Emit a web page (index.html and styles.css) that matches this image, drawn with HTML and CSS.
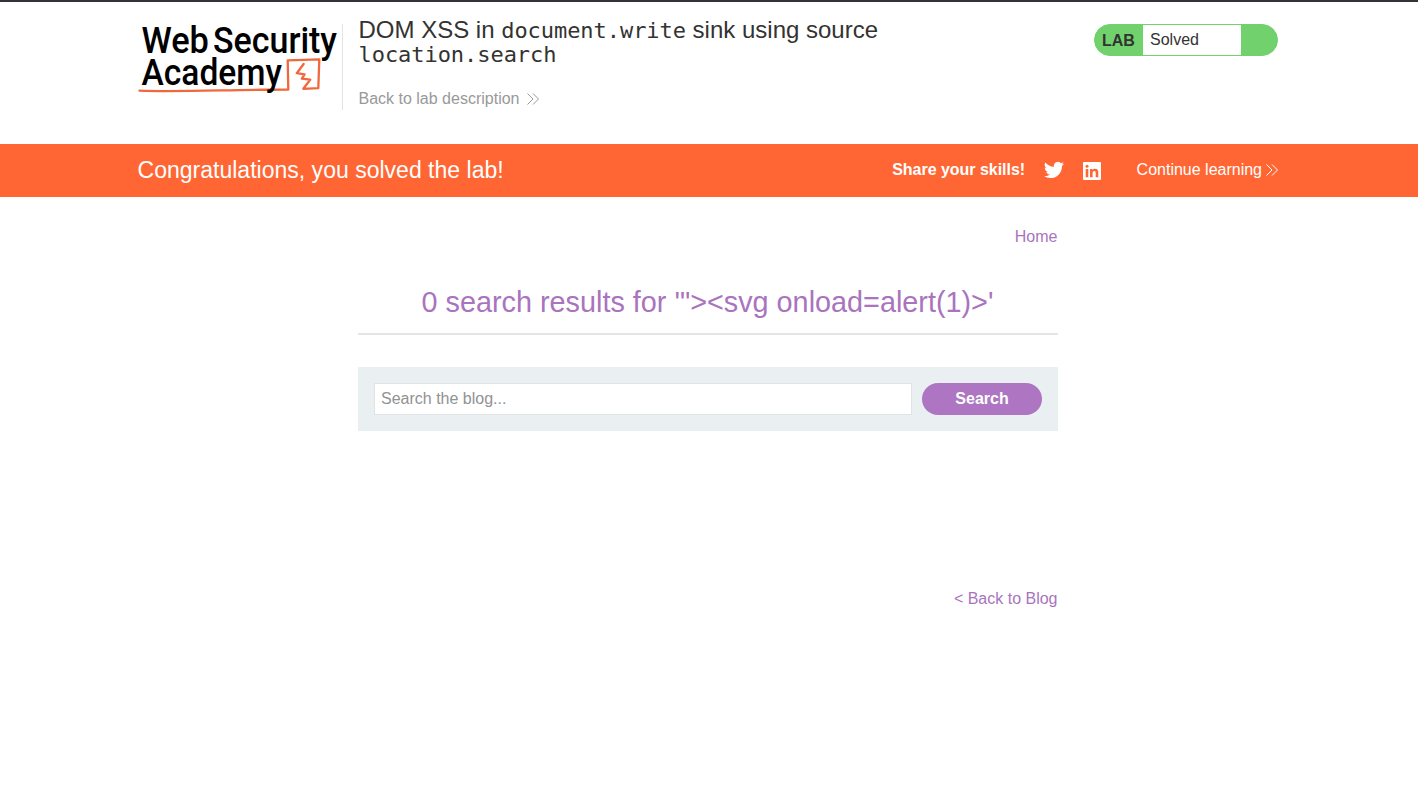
FILE: index.html
```html
<!DOCTYPE html>
<html lang="en">
<head>
<meta charset="utf-8">
<title>DOM XSS in document.write sink using source location.search</title>
<link rel="stylesheet" href="styles.css">
</head>
<body>
<header class="lab-header">
  <div class="container header-row">
    <svg class="logo" viewBox="0 0 204 86" role="img" aria-label="Web Security Academy">
      <path class="logo-line" d="M1.500 66.600 C40 68.200 90 65.600 150.300 65.500 L149.700 36.300 L181.300 35.400 L180.300 64.200 L165.300 64.800 L172.300 55.600 L163.800 54.700 L166.600 50.400 L158.800 49.200 L165.600 40"/>
      <text class="logo-text" x="3.400" y="28.700" textLength="67.500" lengthAdjust="spacingAndGlyphs">Web</text>
      <text class="logo-text" x="75" y="28.700" textLength="124" lengthAdjust="spacingAndGlyphs">Security</text>
      <text class="logo-text" x="3.500" y="61" textLength="140.500" lengthAdjust="spacingAndGlyphs">Academy</text>
    </svg>
    <div class="title-block">
      <h2 class="lab-title">DOM XSS in <code>document.write</code> sink using source <code>location.search</code></h2>
      <a class="back-link">Back to lab description
        <svg class="chevrons" viewBox="0 0 12 12"><path d="M.5 .5 6 6 .5 11.5M6 .5 11.5 6 6 11.5"/></svg>
      </a>
    </div>
    <div class="lab-status"><strong class="status-label">LAB</strong><span class="status-value">Solved</span></div>
  </div>
</header>
<section class="banner">
  <div class="container banner-row">
    <span class="congrats">Congratulations, you solved the lab!</span>
    <div class="share">
      <strong class="share-title">Share your skills!</strong>
      <svg class="twitter" viewBox="0 0 24 24"><path d="M24 4.600a10 10 0 0 1-2.800.8 5 5 0 0 0 2.200-2.700c-1 .6-2 1-3.100 1.200a4.900 4.900 0 0 0-8.400 4.500C7.700 8.100 4.100 6.100 1.700 3.100a4.900 4.900 0 0 0 1.500 6.600c-.8 0-1.600-.2-2.200-.6v.1a4.900 4.900 0 0 0 3.900 4.800c-.7.2-1.500.2-2.200.1a4.900 4.900 0 0 0 4.600 3.400A9.900 9.900 0 0 1 0 19.500 14 14 0 0 0 7.500 21.700c9.100 0 14.300-7.700 14-14.600A10 10 0 0 0 24 4.600z"/></svg>
      <svg class="linkedin" viewBox="0 0 18 18"><rect class="tile" width="18" height="18" rx="1"/><path class="mark" d="M2.700 7h2.600v8.300H2.700zM7 7h2.500v1.100C10 7.300 10.900 6.800 12 6.800c2.600 0 3.300 1.700 3.300 3.900v4.600h-2.600v-4.100c0-1.100-.1-2.200-1.400-2.200S9.600 10 9.600 11.200v4.100H7z"/><circle class="mark" cx="4" cy="4.200" r="1.500"/></svg>
      <a class="continue">Continue learning
        <svg class="chevrons" viewBox="0 0 12 12"><path d="M.5 .5 6 6 .5 11.5M6 .5 11.5 6 6 11.5"/></svg>
      </a>
    </div>
  </div>
</section>
<main class="blog">
  <nav class="top-nav"><a>Home</a></nav>
  <h1 class="results-title">0 search results for '"&gt;&lt;svg onload=alert(1)&gt;'</h1>
  <form class="search">
    <input class="search-input" type="text" placeholder="Search the blog...">
    <button class="search-button" type="button">Search</button>
  </form>
  <nav class="bottom-nav"><a>&lt; Back to Blog</a></nav>
</main>
</body>
</html>
```
FILE: styles.css
```css
* { box-sizing: border-box; }
body {
  margin: 0;
  background: #fff;
  color: #333332;
  font: 16px/20px "Liberation Sans", Arial, sans-serif;
}
.container { width: 1142px; margin: 0 auto; padding-right: 2px; }
.lab-header { height: 144px; border-top: 2px solid #333238; }
.header-row { display: flex; align-items: flex-start; padding-top: 22px; }
.logo { width: 205px; height: 86px; flex: none; border-right: 1px solid #e3e3e3; overflow: visible; }
.logo-text { font: 500 37.5px Roboto, sans-serif; fill: #000; }
.logo-line { fill: none; stroke: #f0683c; stroke-width: 2.3; stroke-linejoin: round; stroke-linecap: round; }
.title-block { width: 560px; margin: -6px 0 0 15.5px; }
.lab-title { margin: 0 0 23px; font-size: 24px; line-height: 24px; font-weight: 400; }
.lab-title code { font: 22px/22px "DejaVu Sans Mono", monospace; letter-spacing: -.05px; }
.back-link { display: flex; align-items: center; gap: 8px; color: #999; }
.chevrons { width: 12px; height: 12px; fill: none; stroke: currentColor; stroke-width: 1; }
.lab-status {
  display: flex; width: 184px; height: 32px; margin-left: auto;
  border: 1px solid #71d26d; border-radius: 16px; background: #71d26d;
  line-height: 30px;
}
.status-label { width: 48px; padding-left: 7px; line-height: 32px; }
.status-value { width: 98px; padding-left: 7px; background: #fff; }
.banner { height: 53px; background: #ff6633; color: #fff; }
.banner-row { display: flex; align-items: center; justify-content: space-between; height: 52px; }
.congrats { font-size: 23.04px; line-height: 28px; margin-left: -.5px; }
.share { display: flex; align-items: center; }
.share-title { letter-spacing: -.03px; }
.twitter { width: 20px; height: 20px; margin-left: 19px; fill: #fff; }
.linkedin { width: 18px; height: 18px; margin: 1px 0 0 19px; }
.tile { fill: #fff; }
.mark { fill: #ff6633; }
.continue { display: flex; align-items: center; gap: 4px; margin-left: 35.5px; }
.blog { width: 702px; margin: 0 auto; padding-right: 2px; color: #a974bd; }
.top-nav { padding: 30px .5px 0 0; text-align: right; }
.results-title {
  margin: 36px 0 32px; padding: 0 1px 11px 0; border-bottom: 2px solid #e4e4e4;
  font-size: 28.8px; line-height: 39px; font-weight: 400; text-align: center;
}
.search { display: flex; gap: 10px; height: 64px; padding: 16px; background: #eaeff2; }
.search-input {
  flex: 1; height: 32px; padding: 0 6px; border: 1px solid #e1e4e6; background: #fff;
  font: inherit;
}
.search-input::placeholder { color: #929292; }
.search-button {
  width: 120px; height: 32px; padding: 0; border: 0; border-radius: 16px;
  background: #ad75c2; color: #fff; font: bold 16px/32px "Liberation Sans", Arial, sans-serif;
}
.bottom-nav { padding: 158px .5px 0 0; text-align: right; }
```
